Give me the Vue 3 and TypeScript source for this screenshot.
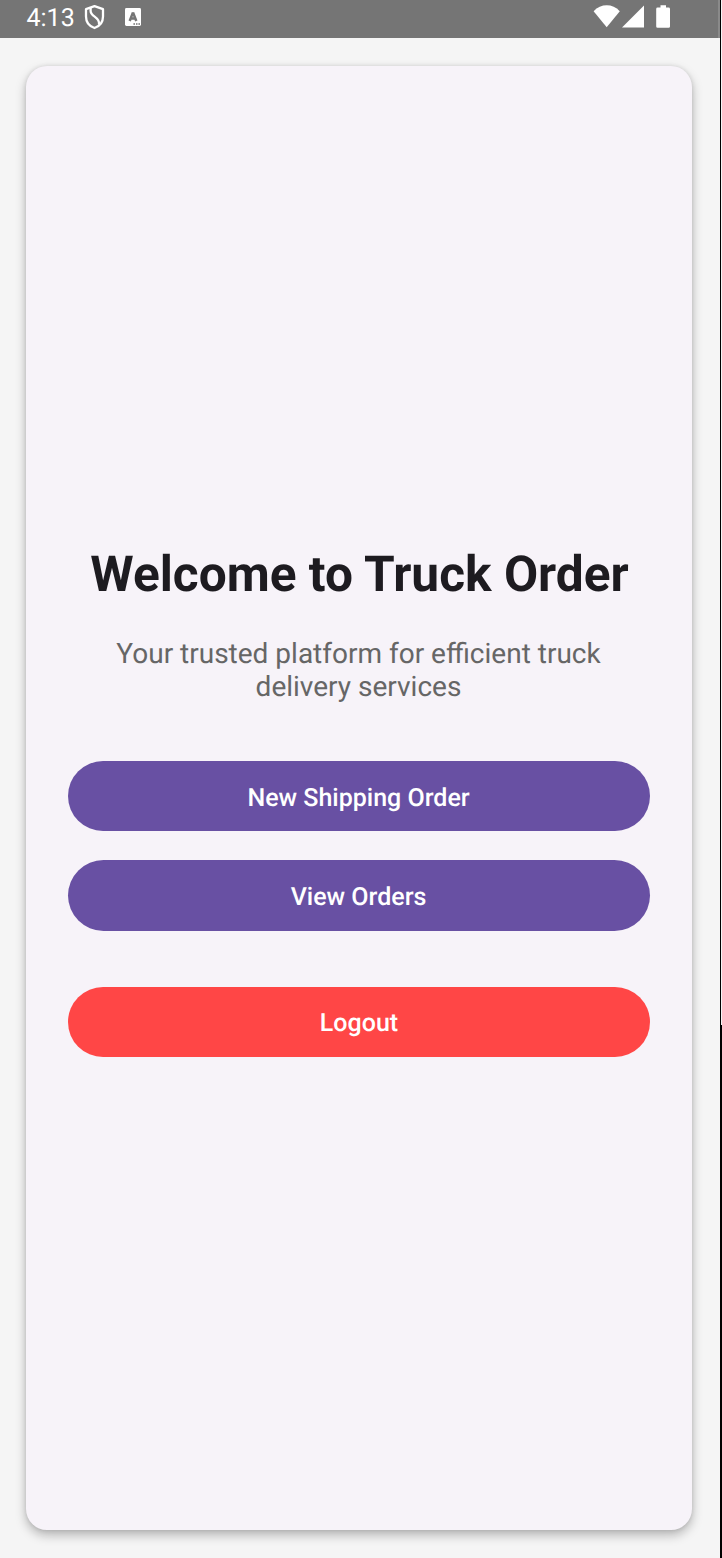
<script setup lang="ts">
interface Action {
  label: string
  kind: 'primary' | 'danger'
}

const time = '4:13'
const title = 'Welcome to Truck Order'
const subtitle: string[] = ['Your trusted platform for efficient truck', 'delivery services']
const actions: Action[] = [
  { label: 'New Shipping Order', kind: 'primary' },
  { label: 'View Orders', kind: 'primary' },
  { label: 'Logout', kind: 'danger' },
]
</script>

<template>
  <div class="frame">
    <div class="screen">
      <header class="status">
        <span class="time">{{ time }}</span>
        <svg class="shield" width="22" height="26" viewBox="0 0 22 26" fill="none" stroke="#fff" stroke-width="2.3" stroke-linejoin="round">
          <path d="M10.5 1.2 L19 4.2 V11.5 C19 17.5 15.5 21.3 10.5 23 C5.5 21.3 2 17.5 2 11.5 V4.2 Z" />
          <path d="M6.6 3 V6 C6.6 12.2 16.4 11.6 15 19.8" />
        </svg>
        <svg class="badge" width="16" height="18" viewBox="0 0 16 18">
          <rect width="16" height="18" rx="1.4" fill="#fff" />
          <path d="M8 4.4 L4.7 13 M8 4.4 L11.3 13 M6 10.4 H10" fill="none" stroke="#757575" stroke-width="2.5" />
          <path d="M8.4 16 H10 M11 16 H12.5 M13.4 16 H15" stroke="#757575" stroke-width="1.3" />
        </svg>
        <span class="spacer"></span>
        <svg class="indicators" width="78" height="24" viewBox="0 0 78 24" fill="#fff">
          <path d="M0.6 6.2 C8 -1.6 19.5 -1.6 26.8 6.2 L13.7 22.2 Z" />
          <path d="M51 0.4 V22.4 H29 Z" />
          <path d="M67.5 0.2 H73 V2.6 H75.6 Q77 2.6 77 4 V21.4 Q77 22.8 75.6 22.8 H64.6 Q63.2 22.8 63.2 21.4 V4 Q63.2 2.6 64.6 2.6 H67.5 Z" />
        </svg>
      </header>
      <main class="card">
        <h1>{{ title }}</h1>
        <p class="subtitle">
          <span v-for="line in subtitle" :key="line">{{ line }}</span>
        </p>
        <button v-for="action in actions" :key="action.label" type="button" :class="action.kind">
          {{ action.label }}
        </button>
      </main>
    </div>
    <div class="edge"></div>
    <div class="sliver"></div>
  </div>
</template>

<style>
body {
  margin: 0;
}
</style>

<style scoped>
.frame {
  display: grid;
  grid-template-columns: 720px 1px 1px;
  width: 722px;
  height: 1558px;
  overflow: hidden;
  font-family: Roboto, "Liberation Sans", sans-serif;
  text-rendering: geometricPrecision;
}

.screen {
  display: flex;
  flex-direction: column;
  background: #f5f5f5;
  overflow: hidden;
}

.edge {
  background: #000;
}

.sliver {
  background: linear-gradient(#f4f4f4 1025px, #000 1025px);
}

.status {
  box-sizing: border-box;
  display: flex;
  align-items: flex-start;
  flex: none;
  height: 38px;
  padding: 5px 47px 0 26.5px;
  background: #757575;
  border-right: 2px solid #8a8a8a;
}

.time {
  width: 57.5px;
  color: #fff;
  font-size: 25px;
  line-height: 27px;
}

.shield {
  flex: none;
}

.badge {
  flex: none;
  margin: 3px 0 0 19px;
}

.spacer {
  flex: 1;
}

.indicators {
  flex: none;
}

.card {
  box-sizing: border-box;
  flex: none;
  display: flex;
  flex-direction: column;
  width: 666px;
  height: 1464px;
  margin: 28px 0 0 26px;
  padding: 480px 42px 0;
  border-radius: 21px;
  background: #f7f3f9;
  box-shadow: 0 5px 11px rgba(0, 0, 0, 0.27), 0 0 4px rgba(0, 0, 0, 0.1);
}

h1 {
  margin: 0 0 0 1px;
  color: #1d1b20;
  font-size: 49.65px;
  font-weight: 700;
  line-height: 59px;
  text-align: center;
  white-space: nowrap;
}

.subtitle {
  display: flex;
  flex-direction: column;
  align-items: center;
  margin: 33px 1px 57.6px 0;
  color: #666;
  font-size: 28px;
  line-height: 32.7px;
  white-space: nowrap;
}

button {
  flex: none;
  height: 70.4px;
  margin: 0 0 28.9px;
  padding: 5px 1px 0 0;
  border: 0;
  border-radius: 36px;
  color: #fff;
  font: 500 25px/30px Roboto, "Liberation Sans", sans-serif;
  text-rendering: geometricPrecision;
}

.primary {
  background: #6850a3;
}

.danger {
  margin-top: 27px;
  padding: 4px 0 0;
  background: #ff4646;
}
</style>
